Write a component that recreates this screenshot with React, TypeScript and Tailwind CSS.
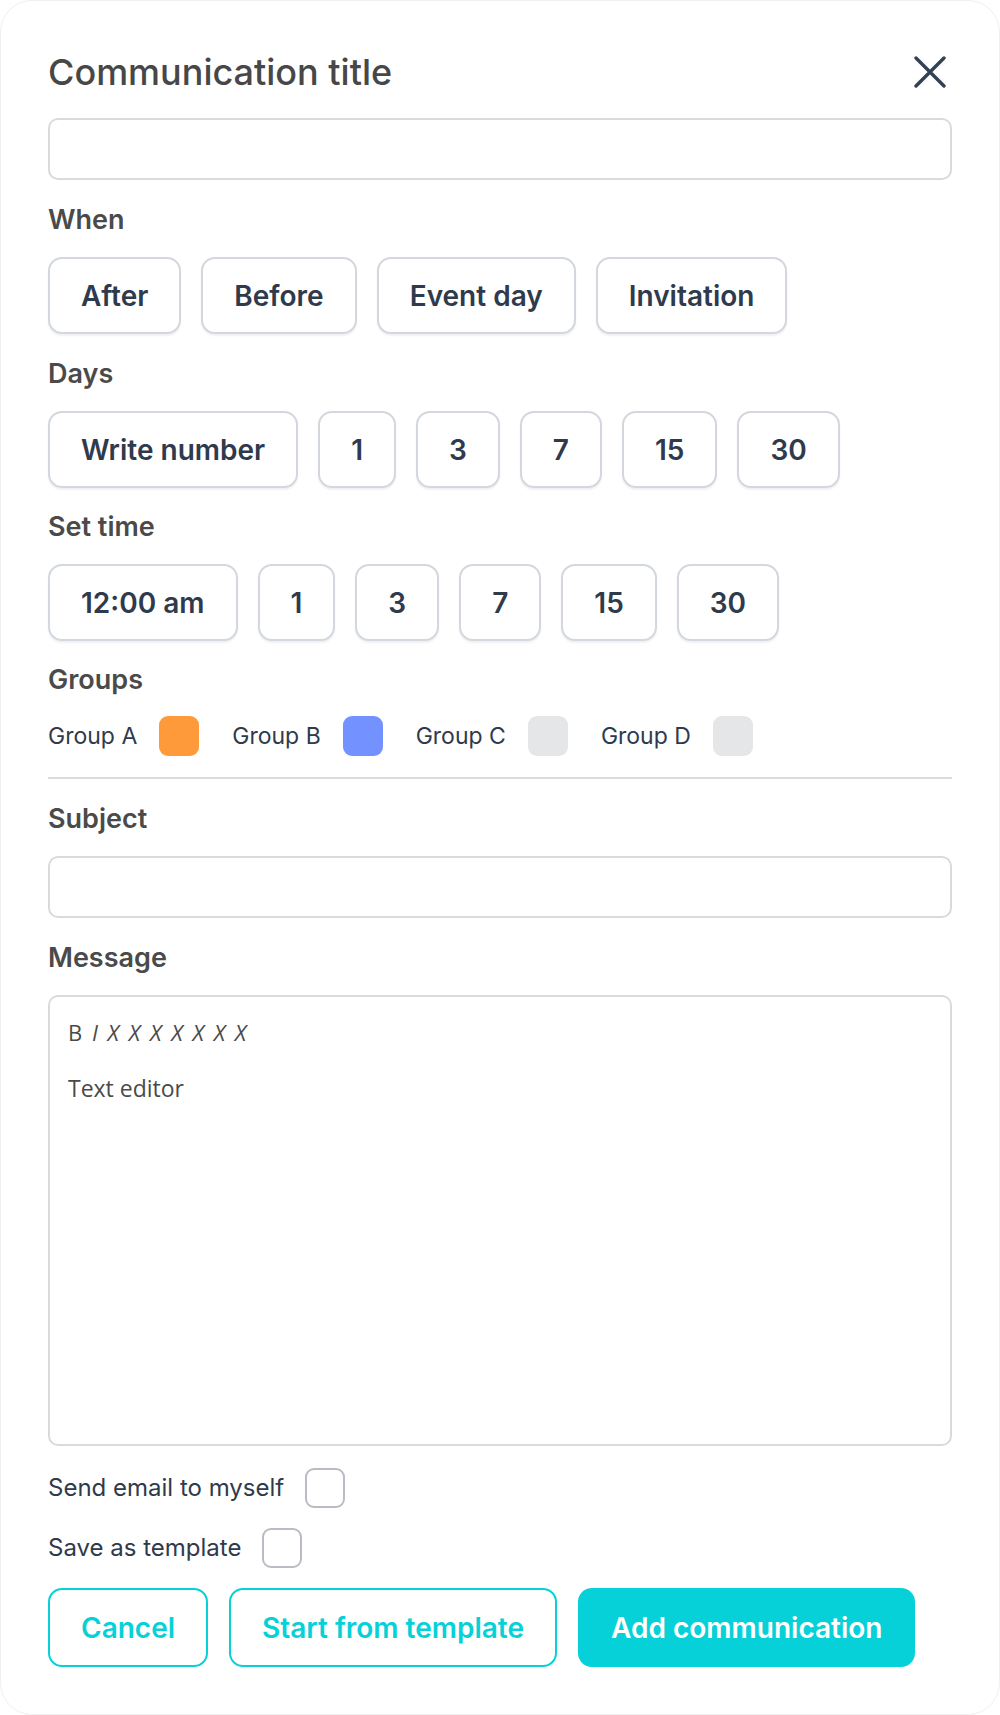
const dayOptions = ["1", "3", "7", "15", "30"];

function OptionButton({ label }: { label: string }) {
  return (
    <button className="flex h-[77px] items-center justify-center rounded-[14px] border-2 border-[#d3d7de] bg-white px-[31px] text-[28px] font-semibold text-[#2f3a4d] shadow-[0_2px_2px_rgba(0,0,0,0.06)]">
      {label}
    </button>
  );
}

function Label({ children }: { children: React.ReactNode }) {
  return (
    <h3 className="text-[27px] leading-[34px] font-semibold text-[#4a4a4a]">
      {children}
    </h3>
  );
}

function Checkbox({ label }: { label: string }) {
  return (
    <label className="flex items-center gap-[21px]">
      <span className="text-[24px] text-[#2f3a4d]">{label}</span>
      <span className="h-[40px] w-[40px] rounded-[9px] border-2 border-[#b9bcc2] bg-white" />
    </label>
  );
}

const groups = [
  { name: "Group A", color: "bg-[#ff9a3a]" },
  { name: "Group B", color: "bg-[#7492ff]" },
  { name: "Group C", color: "bg-[#e5e6e8]" },
  { name: "Group D", color: "bg-[#e5e6e8]" },
];

export default function App() {
  return (
    <div
      className="h-[1715px] w-[1000px] bg-white"
      style={{ fontFamily: "Inter, 'Liberation Sans', sans-serif" }}
    >
      <div className="flex h-full flex-col rounded-[32px] border border-[#efefef] bg-white pt-[51px] pr-[47px] pl-[47px]">
        <div className="flex items-center justify-between">
          <h2 className="text-[36px] leading-[40px] font-medium text-[#474747]">
            Communication title
          </h2>
          <button className="mr-[6px] text-[#334155]" aria-label="Close">
            <svg width="32" height="32" viewBox="0 0 32 32" fill="none">
              <path
                d="M2 2L30 30M30 2L2 30"
                stroke="currentColor"
                strokeWidth="3.4"
                strokeLinecap="round"
              />
            </svg>
          </button>
        </div>

        <input className="mt-[26px] h-[62px] w-full rounded-[10px] border-2 border-[#dadada] bg-white outline-none" />

        <div className="mt-[23px]">
          <Label>When</Label>
        </div>
        <div className="mt-[20px] flex gap-[20px]">
          <OptionButton label="After" />
          <OptionButton label="Before" />
          <OptionButton label="Event day" />
          <OptionButton label="Invitation" />
        </div>

        <div className="mt-[23px]">
          <Label>Days</Label>
        </div>
        <div className="mt-[20px] flex gap-[20px]">
          <OptionButton label="Write number" />
          {dayOptions.map((d) => (
            <OptionButton key={d} label={d} />
          ))}
        </div>

        <div className="mt-[22px]">
          <Label>Set time</Label>
        </div>
        <div className="mt-[20px] flex gap-[20px]">
          <OptionButton label="12:00 am" />
          {dayOptions.map((d) => (
            <OptionButton key={d} label={d} />
          ))}
        </div>

        <div className="mt-[22px]">
          <Label>Groups</Label>
        </div>
        <div className="mt-[19px] flex items-center gap-[33px]">
          {groups.map((g) => (
            <div key={g.name} className="flex items-center gap-[22px]">
              <span className="text-[23px] text-[#2f3a4d]">{g.name}</span>
              <span className={`h-[40px] w-[40px] rounded-[9px] ${g.color}`} />
            </div>
          ))}
        </div>

        <div className="mt-[21px] h-[2px] w-full bg-[#dcdcdc]" />

        <div className="mt-[23px]">
          <Label>Subject</Label>
        </div>
        <input className="mt-[20px] h-[62px] w-full rounded-[10px] border-2 border-[#dadada] bg-white outline-none" />

        <div className="mt-[23px]">
          <Label>Message</Label>
        </div>
        <div
          className="mt-[20px] h-[451px] w-full rounded-[10px] border-2 border-[#dadada] bg-white px-[18px] pt-[20px] text-[#4a4a4a]"
          style={{ fontFamily: "'Open Sans', 'Noto Sans', sans-serif" }}
        >
          <div className="text-[22px] leading-[30px] tracking-[0.5px] [word-spacing:3px]">
            B <span className="italic">I X X X X X X X</span>
          </div>
          <div className="mt-[26px] text-[23px] leading-[30px]">Text editor</div>
        </div>

        <div className="mt-[22px]">
          <Checkbox label="Send email to myself" />
        </div>
        <div className="mt-[20px]">
          <Checkbox label="Save as template" />
        </div>

        <div className="mt-[20px] flex gap-[21px]">
          <button className="h-[79px] rounded-[14px] border-2 border-[#07d1d8] bg-white px-[31px] text-[28px] font-semibold text-[#07d1d8]">
            Cancel
          </button>
          <button className="h-[79px] rounded-[14px] border-2 border-[#07d1d8] bg-white px-[31px] text-[28px] font-semibold text-[#07d1d8]">
            Start from template
          </button>
          <button className="h-[79px] rounded-[14px] bg-[#07d1d8] px-[33px] text-[28px] font-semibold text-white">
            Add communication
          </button>
        </div>
      </div>
    </div>
  );
}
